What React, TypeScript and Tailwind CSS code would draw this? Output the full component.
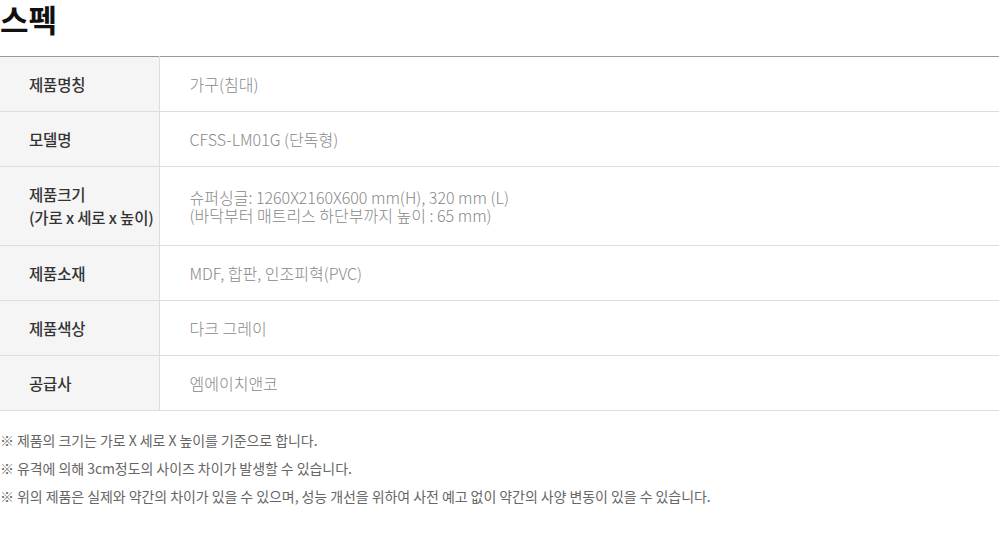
const rows: { label: React.ReactNode; value: React.ReactNode; tall?: boolean }[] = [
  { label: '제품명칭', value: '가구(침대)' },
  { label: '모델명', value: 'CFSS-LM01G (단독형)' },
  {
    label: (
      <>
        제품크기
        <br />
        (가로 x 세로 x 높이)
      </>
    ),
    value: (
      <>
        슈퍼싱글: 1260X2160X600 mm(H), 320 mm (L)
        <br />
        (바닥부터 매트리스 하단부까지 높이 : 65 mm)
      </>
    ),
    tall: true,
  },
  { label: '제품소재', value: 'MDF, 합판, 인조피혁(PVC)' },
  { label: '제품색상', value: '다크 그레이' },
  { label: '공급사', value: '엠에이치앤코' },
];

const notes = [
  '※ 제품의 크기는 가로 X 세로 X 높이를 기준으로 합니다.',
  '※ 유격에 의해 3cm정도의 사이즈 차이가 발생할 수 있습니다.',
  '※ 위의 제품은 실제와 약간의 차이가 있을 수 있으며, 성능 개선을 위하여 사전 예고 없이 약간의 사양 변동이 있을 수 있습니다.',
];

export default function App() {
  return (
    <div className="w-[1000px] h-[534px] bg-white font-['Noto_Sans_CJK_KR',sans-serif]">
      <h2 className="h-[56px] text-[31px] font-bold leading-[38px] text-[#111]">스펙</h2>

      <table className="w-[999px] border-collapse border-t border-t-[#999]">
        <tbody>
          {rows.map((r, i) => (
            <tr key={i} className={`border-b border-b-[#ddd] ${r.tall ? 'h-[79px]' : 'h-[55px]'}`}>
              <th className="w-[159px] whitespace-nowrap border-r border-r-[#ddd] bg-[#f5f5f5] pl-[29px] text-left align-middle text-[15.5px] font-medium leading-[23px] tracking-[-0.01em] text-[#333]">
                {r.label}
              </th>
              <td className="pl-[30px] align-middle text-[16px] font-light leading-[18px] text-[#888]">
                {r.value}
              </td>
            </tr>
          ))}
        </tbody>
      </table>

      <div className="mt-[19px] flex flex-col gap-[8px]">
        {notes.map((n, i) => (
          <p key={i} className="text-[14px] leading-[20px] tracking-[-0.005em] text-[#666]">
            {n}
          </p>
        ))}
      </div>
    </div>
  );
}
